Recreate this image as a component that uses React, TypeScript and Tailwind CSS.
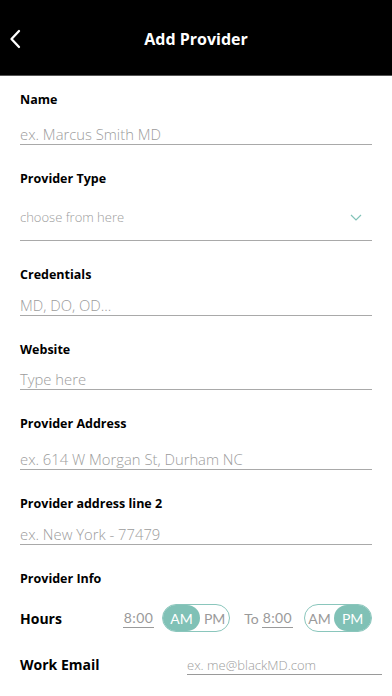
const font = { fontFamily: '"Open Sans", "Noto Sans", sans-serif' }
const timeFont = { fontFamily: 'Lato, "Open Sans", sans-serif' }

function Field({ label, placeholder, gap, mt = 'mt-[25px]' }: { label: string; placeholder: string; gap: string; mt?: string }) {
  return (
    <div className={`px-5 ${mt}`}>
      <div className="text-[12.5px] font-bold text-black leading-[18px]">{label}</div>
      <div className={`${gap} h-[20px] box-content border-b border-[#a9a9a9]`}>
        <span className="block text-[14.8px] font-light text-[#9c9c9c] leading-[20px] whitespace-nowrap">{placeholder}</span>
      </div>
    </div>
  )
}

function Toggle({ active }: { active: 'AM' | 'PM' }) {
  return (
    <div className="flex h-[28px] w-[68px] rounded-full border border-[#8ac6bc] text-[14px]" style={timeFont}>
      <div className={`h-full flex items-center justify-center rounded-full ${active === 'AM' ? 'w-[38px] bg-[#80c1b6] text-white' : 'w-[30px] text-[#9a9a9a]'}`}>AM</div>
      <div className={`h-full flex items-center justify-center rounded-full ${active === 'PM' ? 'w-[38px] bg-[#80c1b6] text-white' : 'w-[30px] text-[#9a9a9a]'}`}>PM</div>
    </div>
  )
}

export default function App() {
  return (
    <main className="w-[392px] h-[696px] bg-white overflow-hidden" style={font}>
      <header className="h-[76px] bg-black flex items-center relative border-b border-[#555]">
        <svg width="24" height="24" viewBox="0 0 24 24" className="absolute left-[4px] top-[27px]">
          <path d="M15 4l-7.5 8 7.5 8" fill="none" stroke="white" strokeWidth="2.3" strokeLinecap="round" strokeLinejoin="round" />
        </svg>
        <h1 className="w-full text-center text-white text-[16px] font-bold pt-[2px]">Add Provider</h1>
      </header>

      <div className="pt-[15px]">
        <Field label="Name" placeholder="ex. Marcus Smith MD" gap="pt-[15px]" mt="mt-0" />

        <div className="px-5 mt-[25px]">
          <div className="text-[12.5px] font-bold text-black leading-[18px]">Provider Type</div>
          <div className="mt-[20px] pb-[14px] border-b border-[#a9a9a9] flex items-center justify-between">
            <span className="text-[13px] font-light text-[#9c9c9c] leading-[18px]">choose from here</span>
            <svg width="12" height="7" viewBox="0 0 12 7" className="mr-[10px]">
              <path d="M1 1l5 5 5-5" fill="none" stroke="#82c3b8" strokeWidth="1.2" />
            </svg>
          </div>
        </div>

        <Field label="Credentials" placeholder="MD, DO, OD..." gap="pt-[11px]" />
        <Field label="Website" placeholder="Type here" gap="pt-[10px]" />
        <Field label="Provider Address" placeholder="ex. 614 W Morgan St, Durham NC" gap="pt-[16px]" />
        <Field label="Provider address line 2" placeholder="ex. New York - 77479" gap="pt-[11px]" />

        <div className="px-5 mt-[25px] text-[12.5px] font-bold text-black leading-[18px]">Provider Info</div>

        <div className="px-5 mt-[16px] flex items-center">
          <div className="w-[105px] text-[14px] font-bold">Hours</div>
          <div className="w-[32px] border-b border-[#9a9a9a] text-[14px] tracking-wide text-[#9a9a9a] leading-[18px] text-center" style={timeFont}>8:00</div>
          <div className="ml-[8px]"><Toggle active="AM" /></div>
          <div className="ml-[14px] text-[14px] text-[#9a9a9a]" style={timeFont}>To</div>
          <div className="ml-[3px] w-[32px] border-b border-[#9a9a9a] text-[14px] tracking-wide text-[#9a9a9a] leading-[18px] text-center" style={timeFont}>8:00</div>
          <div className="ml-[11px]"><Toggle active="PM" /></div>
        </div>

        <div className="pl-5 pr-[10px] mt-[23px] flex items-end">
          <div className="w-[167px] text-[14px] font-bold leading-[20px]">Work Email</div>
          <div className="flex-1 border-b border-[#9a9a9a] text-[13px] font-light text-[#9c9c9c] leading-[18px]">ex. me@blackMD.com</div>
        </div>
      </div>
    </main>
  )
}
